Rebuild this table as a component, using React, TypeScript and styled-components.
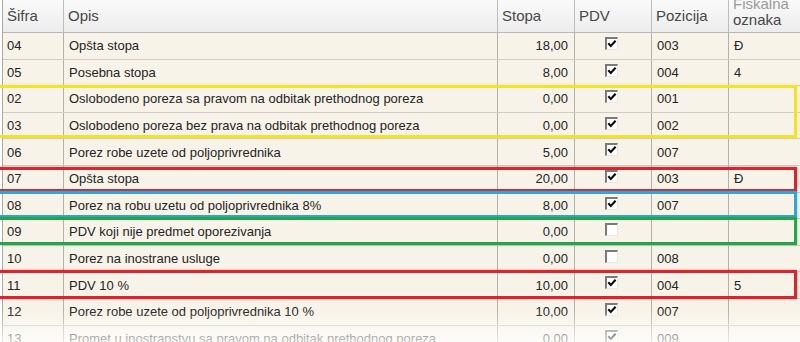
import React from "react";
import styled, { createGlobalStyle } from "styled-components";

const Global = createGlobalStyle`
  html, body { margin: 0; padding: 0; background: #ffffff; }
  body { width: 800px; height: 342px; overflow: hidden; font-family: "Liberation Sans", Arial, sans-serif; }
`;

const COLS = "61px 434px 77px 77px 77px 1fr";
const ROW_H = 26.6;

const Page = styled.div`
  position: relative;
  width: 800px;
  height: 342px;
  overflow: hidden;
  padding-left: 2px;
  box-sizing: border-box;
`;

const Grid = styled.div`
  width: 820px;
  border-left: 1px solid #a9a9a9;
`;

const HeaderRow = styled.div`
  display: grid;
  grid-template-columns: ${COLS};
  height: 33px;
  background: linear-gradient(#fafafa, #ececec);
  border-bottom: 1px solid #b8b8b8;
  box-sizing: border-box;
`;

const HeadCell = styled.div<{ $two?: boolean }>`
  display: flex;
  align-items: ${(p) => (p.$two ? "flex-end" : "center")};
  padding: ${(p) => (p.$two ? "0 0 4px 4px" : "0 0 1px 4px")};
  font-size: 15px;
  line-height: 16px;
  color: #474747;
  border-right: 1px solid #bdbdbd;
  overflow: hidden;
  box-sizing: border-box;
`;

const TwoLine = styled.span`
  display: block;
  & > span:first-child { color: #9a9a9a; }
`;

const Row = styled.div`
  display: grid;
  grid-template-columns: ${COLS};
  height: ${ROW_H}px;
  background: #f7f3e8;
  border-bottom: 1px solid #cfccc4;
  box-sizing: border-box;
`;

const Cell = styled.div<{ $right?: boolean; $center?: boolean; $pl?: number }>`
  display: flex;
  align-items: ${(p) => (p.$center ? "flex-start" : "center")};
  justify-content: ${(p) => (p.$right ? "flex-end" : p.$center ? "center" : "flex-start")};
  padding: ${(p) => (p.$center ? "4px 4px 0 0" : p.$right ? "0 6px 0 0" : `0 0 0 ${p.$pl ?? 5}px`)};
  font-size: 13px;
  color: #242424;
  border-right: 1px solid #b4b1aa;
  white-space: nowrap;
  overflow: hidden;
  box-sizing: border-box;
`;

const Box = styled.span`
  display: inline-block;
  width: 13px;
  height: 13px;
  box-sizing: border-box;
  background: #ffffff;
  border-top: 2px solid #7a7a7a;
  border-left: 2px solid #7a7a7a;
  border-right: 1px solid #e6e6e6;
  border-bottom: 1px solid #e6e6e6;
  position: relative;
`;

const Check = ({ on }: { on: boolean }) => (
  <Box>
    {on && (
      <svg width="10" height="10" viewBox="0 0 10 10" style={{ position: "absolute", left: 0, top: 0 }}>
        <path d="M1.3 4.3 L3.8 7 L8.6 1.8" fill="none" stroke="#0a0a0a" strokeWidth="2.1" />
      </svg>
    )}
  </Box>
);

const Highlight = styled.div<{ $c: string }>`
  position: absolute;
  left: -6px;
  right: 3px;
  border: 3px solid ${(p) => p.$c};
  box-shadow: 0 0 2px ${(p) => p.$c}88;
  box-sizing: border-box;
  pointer-events: none;
`;

const Fade = styled.div`
  position: absolute;
  left: 0;
  right: 0;
  bottom: 0;
  height: 32px;
  background: linear-gradient(rgba(255,255,255,0), rgba(255,255,255,0.72));
  pointer-events: none;
`;

type R = [string, string, string, boolean, string, string];
const rows: R[] = [
  ["04", "Opšta stopa", "18,00", true, "003", "Đ"],
  ["05", "Posebna stopa", "8,00", true, "004", "4"],
  ["02", "Oslobodeno poreza sa pravom na odbitak prethodnog poreza", "0,00", true, "001", ""],
  ["03", "Oslobodeno poreza bez prava na odbitak prethodnog poreza", "0,00", true, "002", ""],
  ["06", "Porez robe uzete od poljoprivrednika", "5,00", true, "007", ""],
  ["07", "Opšta stopa", "20,00", true, "003", "Đ"],
  ["08", "Porez na robu uzetu od poljoprivrednika 8%", "8,00", true, "007", ""],
  ["09", "PDV koji nije predmet oporezivanja", "0,00", false, "", ""],
  ["10", "Porez na inostrane usluge", "0,00", false, "008", ""],
  ["11", "PDV 10 %", "10,00", true, "004", "5"],
  ["12", "Porez robe uzete od poljoprivrednika 10 %", "10,00", true, "007", ""],
  ["13", "Promet u inostranstvu sa pravom na odbitak prethodnog poreza", "0,00", true, "009", ""],
];

const boxes = [
  { c: "#f4e12a", top: 85, h: 53 },
  { c: "#d8262e", top: 167, h: 25 },
  { c: "#2fa6db", top: 191, h: 27 },
  { c: "#27a349", top: 217, h: 28 },
  { c: "#d8262e", top: 270, h: 29 },
];

export default function App() {
  return (
    <Page>
      <Global />
      <Grid>
        <HeaderRow>
          <HeadCell>Šifra</HeadCell>
          <HeadCell>Opis</HeadCell>
          <HeadCell>Stopa</HeadCell>
          <HeadCell>PDV</HeadCell>
          <HeadCell>Pozicija</HeadCell>
          <HeadCell $two>
            <TwoLine>
              <span>Fiskalna</span>
              <br />
              <span>oznaka</span>
            </TwoLine>
          </HeadCell>
        </HeaderRow>
        {rows.map((r) => (
          <Row key={r[0]}>
            <Cell $pl={4}>{r[0]}</Cell>
            <Cell>{r[1]}</Cell>
            <Cell $right>{r[2]}</Cell>
            <Cell $center>
              <Check on={r[3]} />
            </Cell>
            <Cell>{r[4]}</Cell>
            <Cell>{r[5]}</Cell>
          </Row>
        ))}
      </Grid>
      {boxes.map((b, i) => (
        <Highlight key={i} $c={b.c} style={{ top: b.top, height: b.h }} />
      ))}
      <Fade />
    </Page>
  );
}
